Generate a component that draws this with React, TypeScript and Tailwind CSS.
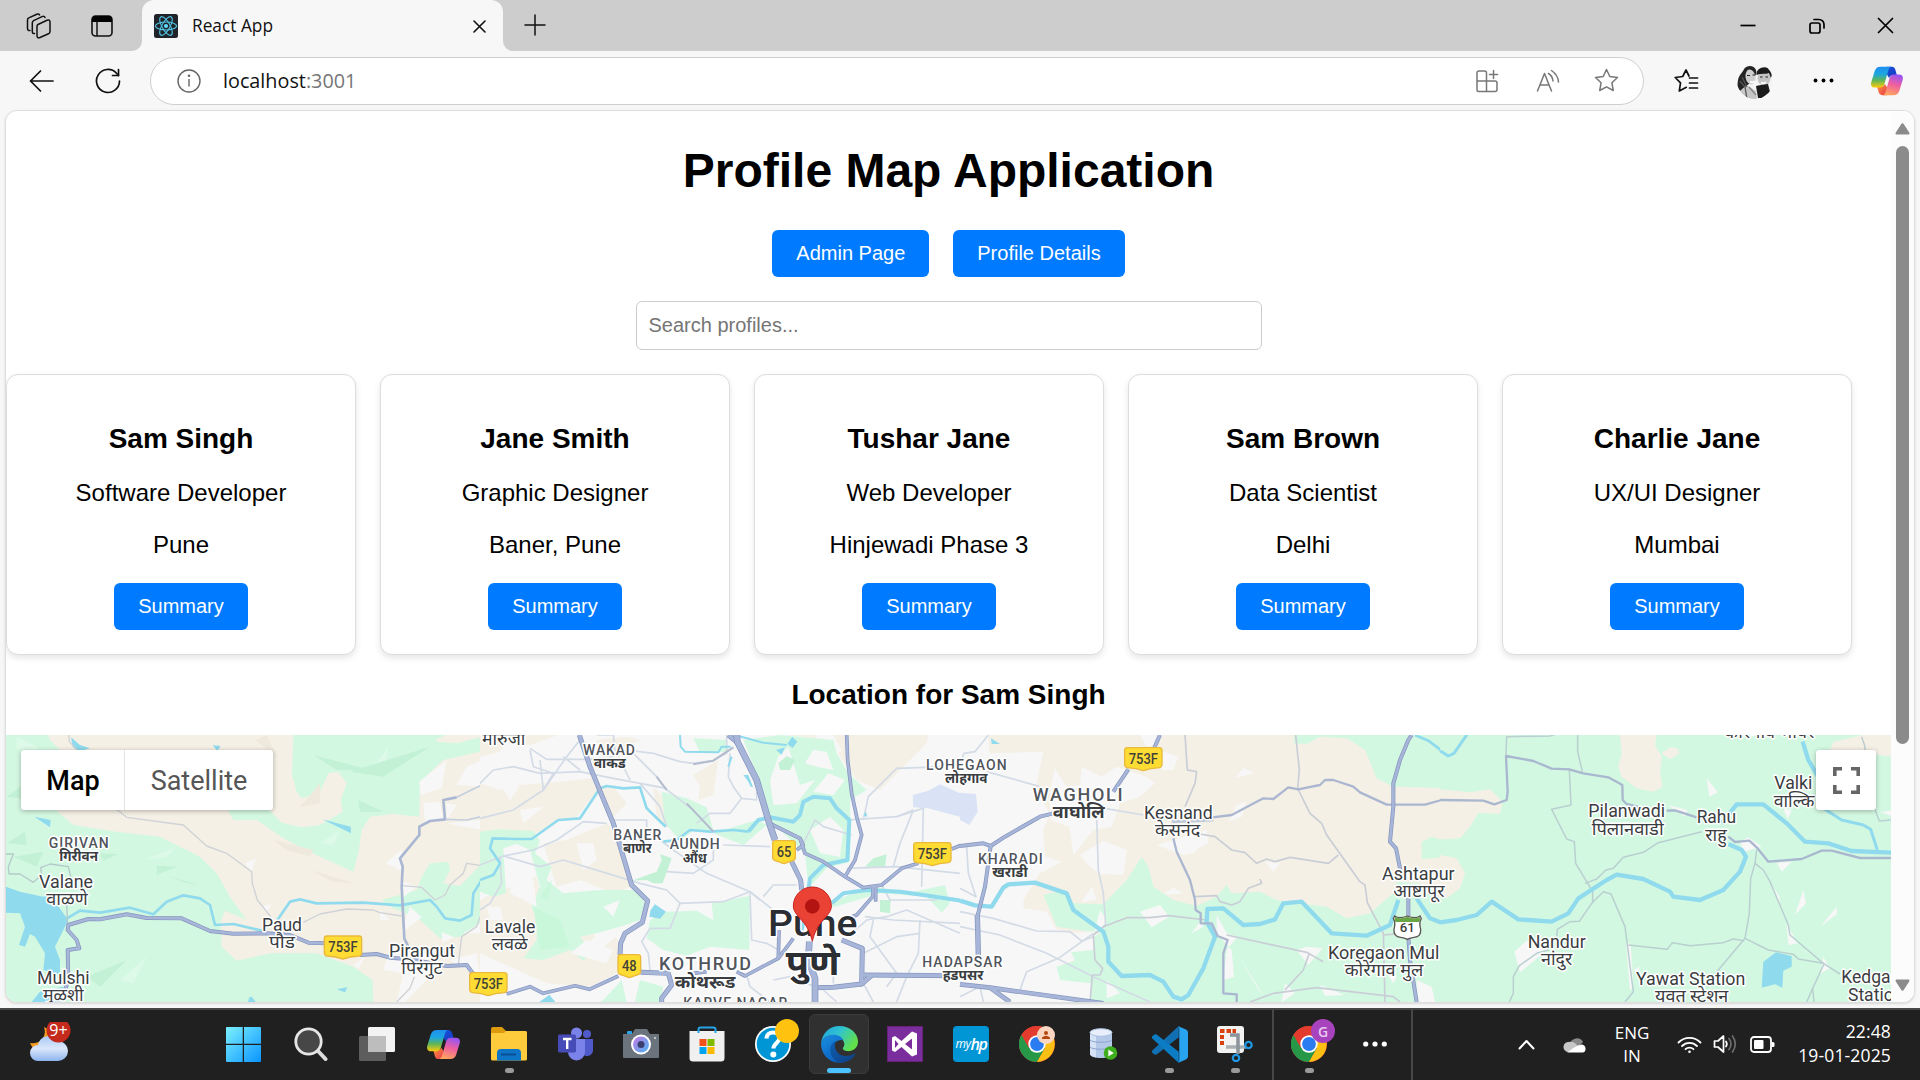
import React from "react";

type Pts = { p: string; f: string };
const BEIGE = "#f5f0e5";
const GREEN = "#d3f8e2";
const DGREEN = "#c3f1d5";
const URBAN = "#f7f7f7";
const WATER = "#90daee";

function Area({ p, f }: Pts) {
  return <polygon points={p} fill={f} />;
}
function Areas({ list, f }: { list: string[]; f: string }) {
  return (
    <>
      {list.map((p, i) => (
        <Area key={i} p={p} f={f} />
      ))}
    </>
  );
}
function Lines({ list, c, w }: { list: string[]; c: string; w: number }) {
  return (
    <>
      {list.map((p, i) => (
        <polyline key={i} points={p} fill="none" stroke={c} strokeWidth={w} strokeLinejoin="round" />
      ))}
    </>
  );
}
function Highway({ list, w = 13 }: { list: string[]; w?: number }) {
  return (
    <>
      <Lines list={list} c="#8494bd" w={w} />
      <Lines list={list} c="#a6b5d8" w={w - 4} />
    </>
  );
}

type LabelProps = { x: number; y: number; w: number; t: string; s: number; wt?: number; c?: string };
function Label({ x, y, w, t, s, wt = 400, c = "#3a3d41" }: LabelProps) {
  return (
    <text
      x={x}
      y={y}
      textAnchor="middle"
      textLength={w}
      lengthAdjust="spacingAndGlyphs"
      fontSize={s}
      fontWeight={wt}
      fill={c}
      stroke="#ffffff"
      strokeWidth={9}
      strokeLinejoin="round"
      style={{ paintOrder: "stroke" }}
    >
      {t}
    </text>
  );
}
function Caps({ x, y, w, t, s }: LabelProps) {
  return (
    <text
      x={x - 2}
      y={y}
      textAnchor="middle"
      textLength={w}
      lengthAdjust="spacing"
      fontSize={s}
      fontWeight={500}
      fill="#51555c"
      stroke="#ffffff"
      strokeWidth={9}
      strokeLinejoin="round"
      style={{ paintOrder: "stroke" }}
    >
      {t}
    </text>
  );
}
function Shield({ x, y, t }: { x: number; y: number; t: string }) {
  const w = t.length > 2 ? 56 : 34;
  return (
    <g transform={`translate(${x} ${y})`}>
      <path
        d={`M${-w + 8},-34 H${w - 8} Q${w},-34 ${w},-26 V16 Q${w},24 ${w - 8},26 Q20,28 0,35 Q-20,28 ${-w + 8},26 Q${-w},24 ${-w},16 V-26 Q${-w},-34 ${-w + 8},-34Z`}
        fill="#ffdc33"
        stroke="#e9b93c"
        strokeWidth={4}
      />
      <text x={0} y={15} textAnchor="middle" fontSize={42} fontWeight={500} fill="#41433a" textLength={t.length > 2 ? 88 : 44} lengthAdjust="spacingAndGlyphs">
        {t}
      </text>
    </g>
  );
}

function MapCanvas() {
  return (
    <svg className="block h-full w-full" viewBox="6 735 1885 267" preserveAspectRatio="none" fontFamily="Roboto, 'Noto Sans', sans-serif">
      <g transform="translate(0 720) scale(0.333333)">
        {/* Far west */}
        <g>
          <Area f={GREEN} p="0,0 1445,0 1445,870 0,870" />
          <Areas
            f="#ddfae8"
            list={["50,50 110,80 118,90 50,88", "1120,140 1165,82 1155,135", "250,400 320,350 270,420", "360,780 440,710 400,790", "960,370 1020,330 1000,375", "430,420 530,380 500,410", "130,720 260,770 200,790"]}
          />
          <Areas
            f={DGREEN}
            list={["940,105 1110,150 1010,150", "1050,155 1290,80 1150,170", "1075,240 1150,275 1080,275", "20,370 75,335 80,375", "40,410 130,395 110,440", "300,400 355,402 310,422", "470,437 530,440 470,465", "500,465 600,497 560,490", "260,770 380,720 300,800", "20,230 62,200 62,235"]}
          />
          <Area
            f={BEIGE}
            p="145,45 880,45 876,165 890,215 905,235 958,220 985,160 1015,155 1040,190 1022,240 1028,275 960,315 905,322 845,308 800,262 680,262 700,300 770,300 850,355 960,410 1060,455 1075,400 1085,330 1110,290 1180,282 1258,290 1260,185 1330,120 1440,95 1445,846 1120,846 1118,780 1060,740 950,700 810,700 710,722 665,680 663,600 675,572 740,600 690,530 650,460 600,410 480,350 350,335 220,315 170,272 100,240 190,100 150,60"
          />
          <Areas f={BEIGE} list={["1305,60 1340,45 1445,45 1445,50 1370,70 1315,66"]} />
          <Areas f="#eee9dc" list={["820,360 940,390 930,410 860,390", "930,450 1065,490 1000,485", "765,60 800,45 830,110", "900,262 960,190 960,250"]} />
          <Area f={GREEN} p="1145,540 1250,510 1265,470 1290,430 1345,425 1350,450 1330,490 1380,498 1445,430 1445,610 1380,650 1320,655 1260,600 1170,560" />
          <Areas
            f={URBAN}
            list={[
              "1258,185 1340,120 1325,205 1262,225",
              "1370,195 1400,140 1445,120 1445,200",
              "1270,250 1320,245 1330,300 1275,305",
              "1340,250 1370,255 1340,300",
              "1340,310 1440,300 1445,330",
              "1157,430 1205,388 1203,452",
              "735,430 768,415 755,455",
              "1230,560 1265,592 1203,640",
              "1325,637 1362,652 1328,668",
              "1200,480 1250,500 1205,535",
              "1140,570 1170,600 1140,600",
              "780,560 815,553 800,575",
              "1170,690 1310,700 1280,780 1215,846 1190,846 1210,760 1150,750",
              "1060,735 1095,710 1075,745",
              "1350,720 1430,700 1440,760 1375,740",
              "1390,640 1440,610 1440,640",
            ]}
          />
          <Areas
            f={WATER}
            list={[
              "18,500 60,515 130,530 160,520 165,545 205,600 180,650 165,680 180,720 180,765 130,750 135,700 105,650 90,642 75,680 57,675 75,620 60,580 18,578",
              "213,52 240,75 270,85 235,95 218,80",
              "638,75 662,78 652,93",
              "103,290 152,300 150,322",
              "967,298 1052,320 1053,340",
              "1010,808 1042,802 1035,817",
              "748,832 755,830 768,846 744,846",
              "120,815 190,800 180,846 95,846",
            ]}
          />
          <Lines c={WATER} w={8} list={["185,605 240,572 300,578 390,563 460,583 500,545 550,526 600,535 630,555 645,615 700,612 785,632", "832,600 870,545 900,538 950,550 1090,548 1200,556 1290,540 1310,560 1335,595 1380,602 1415,585 1420,520 1445,480"]} />
          <Lines c="#b5c9c9" w={4} list={["18,402 40,402 25,440 27,462 60,462 100,487 125,465 122,443 150,432 205,440 212,470", "200,550 203,620"]} />
          <Lines
            c="#cfd2d6"
            w={4}
            list={[
              "206,45 208,65 240,100",
              "345,265 380,292 550,315 620,378 680,400 755,455 757,490 772,540 812,590",
              "910,607 960,582 1040,567 1120,570 1140,578 1205,588",
              "1208,497 1265,502 1305,540 1335,525 1350,495 1390,460 1400,430 1445,437",
              "1243,770 1230,805 1190,846",
              "1375,735 1385,650 1430,620 1440,590",
            ]}
          />
          <Lines c="#c3cede" w={5} list={["1335,298 1400,300 1445,290", "1370,232 1445,195"]} />
          <Lines c="#a9b7d2" w={8} list={["1370,232 1330,240 1335,298 1290,303 1258,320 1258,345 1200,415 1208,440 1205,500 1213,655 1225,680"]} />
          <Highway w={12} list={["192,820 205,780 203,690 238,685 230,660 203,630 205,615 265,597 300,598 380,583 440,594 545,595 630,633 700,641 800,640 870,645 925,668 980,670", "1080,705 1130,702 1170,713 1230,718 1340,738 1400,735 1430,775"]} />
        </g>

        {/* City centre */}
        <g transform="translate(1440 0)">
          <Area f={URBAN} p="0,0 1445,0 1445,870 0,870" />
          <Areas
            f={BEIGE}
            list={[
              "0,45 235,45 150,75 85,60 60,95 0,110",
              "0,190 60,210 120,195 240,185 335,175 350,215 290,290 235,300 160,345 60,335 0,340",
              "190,370 260,360 330,330 385,310 440,430 455,500 400,520 300,480 230,500",
              "0,540 60,510 100,500 170,470 190,560 330,610 345,650 300,690 360,690 410,650 420,705 410,760 330,800 200,790 90,740 0,700",
              "350,60 440,50 480,60 370,110",
              "920,45 1345,45 1340,70 1200,210 1130,180 1080,110 1060,60",
              "520,200 570,250 565,325 530,290",
              "640,165 715,120 700,225 655,240 660,200",
              "340,200 400,200 440,250 400,290",
            ]}
          />
          <Area f={URBAN} p="1010,45 1060,45 1085,90 1050,120 1000,70" />
          <Areas
            f={GREEN}
            list={[
              "0,335 60,328 160,332 180,362 165,400 215,440 200,480 250,520 360,510 470,510 495,550 480,600 420,620 350,640 300,650 330,690 345,690 310,722 270,690 190,720 130,715 170,660 170,600 155,560 180,500 150,390 110,372 70,385 78,520 40,530 0,515",
              "790,60 900,45 1060,60 1070,100 1105,160 1160,210 1110,240 1112,330 1110,425 1040,445 985,505 975,400 900,330 870,300 845,200",
              "545,215 620,235 680,262 700,330 640,332 600,362 555,310",
              "510,600 560,575 650,572 700,600 695,550 810,527 808,690 690,680 620,707 550,690 500,655",
              "700,340 830,300 860,315 790,375",
              "1045,550 1170,500 1300,515 1395,495 1410,550 1385,578 1340,530 1200,520 1060,562",
              "370,840 425,780 440,846 360,846",
              "480,780 550,800 540,846 465,846",
              "640,55 740,60 745,95 660,98",
            ]}
          />
          <Areas
            f={URBAN}
            list={[
              "870,180 895,110 925,80 960,195 1005,180 950,250 880,255",
              "1000,215 1045,160 1095,180 1060,225",
              "1050,290 1090,330 1080,410 1020,400 990,330",
              "975,130 1000,90 1040,95 1060,150 1010,140",
              "120,270 190,260 130,310",
              "60,190 120,200 90,240",
              "100,430 160,480 170,560 90,520",
              "370,560 420,540 400,590",
              "270,700 320,660 400,690 380,730",
              "290,370 340,370 350,420 310,450",
              "20,560 60,560 70,600 30,600",
            ]}
          />
          <Areas f={DGREEN} list={["455,482 530,455 545,420 540,402 575,415 548,490 520,490 500,480", "1200,540 1232,540 1230,580 1200,575", "1155,440 1180,415 1220,403 1215,440", "895,130 920,108 945,120 930,150 900,150"]} />
          <Areas f="#c9f7da" list={["160,560 240,600 270,680 180,690", "180,530 215,480 205,540"]} />
          <Area f="#d9e3f5" p="1298,225 1345,212 1380,193 1445,222 1445,292 1345,265 1300,262" />
          <Lines
            c="#d3dbe6"
            w={5}
            list={[
              "0,190 40,150 100,140 180,160 300,155 400,175 560,205",
              "0,295 100,270 190,210 260,110 300,60",
              "150,90 160,140 220,160 190,210",
              "150,85 200,118 330,118 400,110 440,90 520,100 600,125 640,130 700,122 760,82",
              "180,120 190,210",
              "460,100 530,170 555,205 640,270 700,335",
              "0,435 70,408 180,440 250,420 480,490 560,510 600,550 570,625 510,625 485,665 505,700 510,750",
              "70,408 160,390 230,360 310,305 380,310",
              "400,300 500,300 500,330 580,390 680,460 810,515 840,540",
              "700,365 700,420 640,460 560,455",
              "480,190 540,260 560,320",
              "350,45 400,45 405,90 450,180",
              "750,100 745,170 760,200 785,235 830,240 830,215",
              "785,235 750,280 690,280 650,310",
              "600,550 730,545 810,515 880,570",
              "810,520 815,660 860,670 895,690",
              "850,530 880,495 950,495",
              "730,375 870,380",
              "970,370 990,330 1005,300 1030,320 1115,345",
              "1105,300 1250,290 1330,265 1325,500",
              "1150,300 1165,230 1250,145 1400,140",
              "1250,290 1300,270 1260,370 1240,440",
              "1100,445 1250,440 1440,460",
              "1205,495 1230,540 1370,540",
              "1155,590 1240,600 1440,610",
              "1115,640 1160,600 1220,590 1280,570 1440,640",
              "1180,600 1170,650 1250,760 1220,800",
              "1320,600 1315,700 1280,770 1250,846",
              "1150,700 1250,650 1320,640",
              "800,765 810,800 870,846",
              "880,780 930,770 1005,800",
              "1030,810 1070,846",
              "1060,700 1060,790",
              "1150,790 1180,846",
              "60,410 65,490 30,550 0,570",
              "250,110 300,150",
              "740,45 740,100 700,120",
            ]}
          />
          <Areas f={WATER} list={["508,590 512,570 525,553 558,575 540,596", "937,50 952,65 938,84 922,72", "888,90 915,82 905,104", "178,846 208,824 226,846", "1150,285 1158,275 1162,292", "790,165 805,165 820,205"]} />
          <Lines c={WATER} w={8} list={["0,480 40,465 60,430 30,385 38,355 110,357 155,357 235,300 300,295 360,205 380,198 430,205 480,202 500,265 557,320", "550,365 590,360 630,330 690,335 760,330 805,335"]} />
          <Lines
            c={WATER}
            w={12}
            list={["805,335 835,300 870,292 940,305 960,285 970,245 1000,230 1050,235 1070,265 1108,300 1102,420 1030,435 990,475 985,510 980,560 965,630", "1055,550 1090,520 1160,510 1260,515 1330,525 1445,542"]}
          />
          <Lines c={WATER} w={6} list={["600,45 602,80 615,95 715,97 725,80 752,80", "775,48 850,68 920,75", "755,110 745,140", "800,165 815,200"]} />
          <Lines c="#b3bccd" w={6} list={["530,170 560,210", "620,250 700,335", "640,133 700,122 760,82"]} />
          <Highway
            w={11}
            list={[
              "80,822 150,800 190,820 285,797 328,808 415,768",
              "640,760 680,755",
              "770,755 795,768 895,715 940,655",
              "895,715 897,630",
              "875,313 960,355 970,375 950,390",
              "875,313 960,355 975,400 1030,425 1095,470 1150,503 1205,495 1265,445 1315,430",
              "1415,387 1445,375",
              "1100,45 1103,120 1115,220 1130,290 1145,345 1125,420 1095,470",
              "1180,500 1178,530 1130,585 1090,600",
              "1187,500 1187,545",
            ]}
          />
          <Highway
            w={15}
            list={[
              "298,45 330,140 400,310 455,495 503,542 487,607 435,640 422,670 420,705",
              "482,757 565,760 575,795 545,835 545,846",
              "935,425 962,480 965,510",
              "745,45 775,70",
              "1085,660 1147,685 1145,792 1175,766",
              "1145,765 1445,767",
              "1005,803 1060,802 1145,792",
            ]}
          />
          <Highway w={20} list={["770,45 772,65 830,180 868,310 885,360", "988,665 985,720 1005,775 1005,846"]} />
        </g>

        {/* East of the city */}
        <g transform="translate(2880 0)">
          <Area f={BEIGE} p="0,0 1445,0 1445,870 0,870" />
          <Areas
            f={URBAN}
            list={[
              "0,45 85,45 88,100 250,95 225,210 270,280 250,330 255,410 305,425 240,460 190,540 190,565 260,575 290,630 330,650 420,640 400,700 290,740 310,780 400,790 400,846 0,846",
              "270,210 285,145 320,200 360,195 365,140 425,170 470,140 560,170 585,190 540,230 480,250 455,320 400,330 340,405 328,320 270,300",
              "540,45 610,45 590,75 560,80",
              "610,95 655,110 640,150 605,150",
              "825,175 850,143 882,160",
              "360,405 430,362 500,390 490,465 420,462 390,440",
              "590,375 740,330 745,370 715,385 700,400 670,405",
              "805,305 830,255 858,245 845,290",
              "605,525 640,503 672,520",
              "915,425 960,430 940,455",
              "365,545 395,500 410,540",
            ]}
          />
          <Areas
            f={GREEN}
            list={[
              "250,525 310,510 340,550 430,552 500,480 545,410 565,440 580,500 640,540 710,558 770,530 800,495 815,520 900,515 950,540 1100,560 1160,595 1230,580 1300,520 1310,485 1380,490 1445,555 1445,846 390,846 395,790 300,780 290,740 345,722 330,690 420,640 290,620",
              "1002,45 1445,45 1445,205 1370,202 1300,200 1250,175 1215,90 1160,55 1080,50 1040,72 1002,70",
              "1385,365 1415,350 1445,360 1445,412 1385,418",
            ]}
          />
          <Area f={URBAN} p="270,620 330,640 425,632 440,600 420,570 400,650 400,690 300,700 260,700" />
          <Areas
            f={URBAN}
            list={[
              "540,575 600,555 628,590 575,622",
              "770,585 800,640 832,650 800,690 790,780 822,770 815,690 770,640",
              "835,705 912,830 890,800",
              "1040,680 1088,685 1045,735 1010,690",
              "695,640 720,605 730,620",
              "975,790 1005,820 965,846",
              "440,780 480,820 440,835",
              "1080,795 1152,825 1095,828",
              "1280,760 1310,770 1300,790",
              "1370,780 1415,800 1425,846 1370,846",
            ]}
          />
          <Area f="#d9e3f5" p="0,218 48,222 53,275 28,315 0,300" />
          <Area f={WATER} p="93,55 120,72 95,72" />
          <Lines
            c="#d3dbe6"
            w={5}
            list={[
              "85,45 45,95 12,100 0,130",
              "80,155 240,200",
              "435,265 550,285",
              "410,300 415,450 430,520 437,615",
              "20,380 25,460 48,530 0,505",
              "0,575 100,595 230,633 330,635 365,663 400,650",
              "400,640 295,715 200,755 180,810",
              "0,620 120,645 260,700 400,770 570,846",
              "60,800 70,846",
              "0,830 50,805",
            ]}
          />
          <Lines
            c="#c9ced6"
            w={5}
            list={[
              "675,45 682,150 710,155 705,190 675,260",
              "1007,45 1018,150 1013,205 1050,280 1085,310 1100,345 1200,485 1215,495 1222,548 1270,640 1275,846",
              "720,342 765,350 815,390 855,398 890,430 920,417 945,425 990,412 1105,430 1135,405",
              "705,530 770,527 780,545 815,555 840,545 865,505 905,490 900,477",
              "430,620 500,593 570,593 625,587 740,600",
              "800,645 1040,697 1090,725",
              "1048,700 1030,750 975,810",
              "437,615 400,645 405,720 428,745 420,765 397,765 390,846",
              "870,846 940,820 1070,803 1300,830 1320,846",
              "1270,645 1330,640",
            ]}
          />
          <Lines
            c={WATER}
            w={13}
            list={[
              "0,542 45,556 95,560 130,503 145,493 225,488 320,520 340,570 430,635 445,680 445,725 485,768 570,765 610,785 640,830 665,838 685,825 730,745 765,650 740,605 742,567 790,565 850,615 900,612 945,598 970,550 1025,545 1115,640 1220,647 1290,615 1315,540",
              "1370,535 1410,595 1445,608",
            ]}
          />
          <Lines c={WATER} w={8} list={["1365,45 1405,62 1445,92"]} />
          <Lines c="#abb7d0" w={7} list={["640,355 650,395 690,480 705,540 707,570 722,580 722,610 755,610 773,648 803,660 790,700 790,820 830,823 830,846", "758,292 815,285 910,235 940,237 985,202 1015,208 1080,195 1095,180 1120,180 1180,200 1200,217 1280,254 1395,254 1445,240"]} />
          <Lines c="#c0c9da" w={9} list={["635,305 760,300"]} />
          <Highway w={12} list={["600,45 580,90", "505,148 460,215", "0,378 70,370 92,378 135,350 240,290 280,280", "92,378 75,500 52,590", "1355,45 1345,60 1320,120 1300,190 1300,260 1290,365 1308,385 1325,470", "1345,530 1345,590", "1345,650 1350,720 1370,846"]} />
          <Highway w={16} list={["52,585 55,705"]} />
          <Highway w={14} list={["0,793 90,803 430,850", "90,803 150,846"]} />
        </g>

        {/* Far east */}
        <g transform="translate(4320 0)">
          <Area f={GREEN} p="0,0 1445,0 1445,870 0,870" />
          <Areas
            f={BEIGE}
            list={[
              "540,45 650,45 645,75 665,110 660,160 668,200 640,215 590,205 545,170 535,140 545,100",
              "665,100 690,82 712,85 718,100 690,118",
              "0,208 90,217 150,208 188,245 180,282 115,278 90,320 60,355 0,358",
              "0,405 50,415 75,460 60,505 20,535 0,525",
              "1180,65 1270,45 1360,45 1360,110 1170,90",
            ]}
          />
          <Areas
            f={URBAN}
            list={[
              "800,175 833,217 808,230",
              "685,255 742,270 735,290",
              "900,365 925,352 965,380 912,395",
              "1010,428 1055,425 1025,455",
              "1030,265 1055,270 1043,298",
              "1090,510 1098,550 1065,585",
              "1190,560 1190,583 1143,618",
              "985,480 1018,530 1020,555",
              "1040,610 1072,670 1045,675",
              "223,695 260,662 320,690 285,720 240,757",
              "558,672 572,670 580,800 570,810",
              "1150,710 1168,745 1140,762",
              "1320,275 1360,272 1360,290",
              "580,750 600,740 595,760",
            ]}
          />
          <Lines
            c="#b9cfd0"
            w={4.5}
            list={[
              "198,105 200,50 330,48 348,42",
              "413,45 413,95 427,155",
              "388,150 393,255 335,268 380,357 403,365 407,430 458,515 458,550",
              "435,490 470,477 498,450 520,445 550,412 610,397 655,368 720,352 785,335",
              "350,650 352,628 390,605 418,604 455,550 490,515 513,522 555,620 580,815 555,846",
              "565,675 682,688 697,668 750,677 850,668 880,657 912,662",
              "950,390 945,430 932,475 928,580 915,655 835,750 800,800",
              "945,430 970,450 990,485 1045,615 1050,645 1150,730 1200,762",
              "915,655 985,690 1060,703 1075,717 1150,730",
              "1152,732 1118,805 1122,846",
              "1118,805 1100,846",
              "325,690 290,700 238,737 220,770 220,820 208,846",
              "1265,50 1275,80 1275,100",
              "1300,255 1318,303 1355,300",
            ]}
          />
          <Lines c="#a9b7cf" w={7} list={["0,240 130,242 163,253 200,240 203,215 198,108 280,123 335,146 388,148 430,160 505,172 547,195 548,240 560,252 600,262", "680,272 705,271 770,292", "865,350 885,366 928,362 950,382 985,425 1085,417 1145,392 1175,392 1260,414 1360,414"]} />
          <Lines
            c={WATER}
            w={13}
            list={[
              "0,607 50,600 110,585 155,545 235,598 335,605 385,580 415,535 500,480 530,464 610,477 690,515 700,530 780,540 850,510 900,455 918,410 905,390 865,372",
              "845,310 890,253 970,253 1040,310 1095,365 1165,370 1235,393 1360,398",
              "1088,65 1105,120 1140,180",
            ]}
          />
          <Lines c={WATER} w={9} list={["0,92 25,108 42,100 82,42", "1150,265 1205,300 1270,315 1292,328 1312,390"]} />
          <Area f={WATER} p="970,725 1008,697 1055,708 1055,740 1030,752 1027,803 1005,793 965,803" />
        </g>

        {/* Shields */}
        <Shield x={1029} y={682} t="753F" />
        <Shield x={1465} y={792} t="753F" />
        <Shield x={1888} y={738} t="48" />
        <Shield x={2352} y={396} t="65" />
        <Shield x={2797} y={402} t="753F" />
        <Shield x={3430} y={117} t="753F" />
        <g transform="translate(4222 620)">
          <path d="M-38,-32 Q-25,-22 0,-32 Q25,-22 38,-32 L42,-24 Q34,-12 40,8 Q42,30 20,32 Q8,33 0,38 Q-8,33 -20,32 Q-42,30 -40,8 Q-34,-12 -42,-24Z" fill="#fff" stroke="#5b5652" strokeWidth={4} />
          <path d="M-37,-30 Q-25,-20 0,-30 Q25,-20 37,-30 L38,-20 Q36,-16 35,-14 H-35 Q-36,-16 -38,-20Z" fill="#6aa543" />
          <text x={0} y={17} textAnchor="middle" fontSize={40} fontWeight={500} fill="#41433f">61</text>
        </g>

        {/* Place names */}
        <Caps x={238} y={383} w={180} t="GIRIVAN" s={42} />
        <Label x={236} y={423} w={116} t="गिरीवन" s={44} wt={700} />
        <Label x={198} y={504} w={162} t="Valane" s={54} />
        <Label x={201} y={556} w={124} t="वाळणे" s={53} />
        <Label x={190} y={793} w={158} t="Mulshi" s={54} />
        <Label x={190} y={844} w={122} t="मुळशी" s={53} />
        <Label x={846} y={633} w={120} t="Paud" s={54} />
        <Label x={846} y={684} w={78} t="पौड" s={53} />
        <Label x={1266} y={710} w={198} t="Pirangut" s={54} />
        <Label x={1266} y={762} w={124} t="पिरंगुट" s={53} />
        <Label x={1511} y={76} w={130} t="मारुंजी" s={53} />
        <Caps x={1829} y={104} w={156} t="WAKAD" s={42} />
        <Label x={1829} y={144} w={96} t="वाकड" s={44} wt={700} />
        <Caps x={1914} y={359} w={144} t="BANER" s={42} />
        <Label x={1912} y={399} w={86} t="बाणेर" s={44} wt={700} />
        <Caps x={2086} y={388} w={150} t="AUNDH" s={42} />
        <Label x={2084} y={428} w={72} t="औंध" s={44} wt={700} />
        <Label x={1530} y={638} w={152} t="Lavale" s={54} />
        <Label x={1529} y={689} w={108} t="लवळे" s={53} />
        <Caps x={2117} y={751} w={276} t="KOTHRUD" s={54} />
        <Label x={2115} y={803} w={182} t="कोथरूड" s={53} wt={700} />
        <Caps x={2208} y={865} w={312} t="KARVE NAGAR" s={42} />
        <Label x={2438} y={649} w={268} t="Pune" s={112} wt={500} c="#2b2e33" />
        <Label x={2438} y={766} w={162} t="पुणे" s={106} wt={700} c="#2b2e33" />
        <Caps x={2901} y={149} w={242} t="LOHEGAON" s={42} />
        <Label x={2899} y={189} w={128} t="लोहगाव" s={44} wt={700} />
        <Caps x={2889} y={741} w={240} t="HADAPSAR" s={42} />
        <Label x={2889} y={781} w={122} t="हडपसर" s={44} wt={700} />
        <Caps x={3235} y={242} w={270} t="WAGHOLI" s={54} />
        <Label x={3236} y={293} w={156} t="वाघोलि" s={53} wt={700} />
        <Caps x={3033} y={431} w={194} t="KHARADI" s={42} />
        <Label x={3030} y={471} w={106} t="खराडी" s={44} wt={700} />
        <Label x={3535} y={296} w={206} t="Kesnand" s={54} />
        <Label x={3533} y={348} w={136} t="केसनंद" s={53} />
        <Label x={4255} y={479} w={218} t="Ashtapur" s={54} />
        <Label x={4257} y={531} w={154} t="आष्टापूर" s={53} />
        <Label x={4151} y={717} w={334} t="Koregaon Mul" s={54} />
        <Label x={4152} y={769} w={236} t="कोरेगाव मुल" s={53} />
        <Label x={4880} y={292} w={230} t="Pilanwadi" s={54} />
        <Label x={4883} y={344} w={216} t="पिलानवाडी" s={53} />
        <Label x={5149} y={310} w={118} t="Rahu" s={54} />
        <Label x={5148} y={362} w={64} t="राहु" s={53} />
        <Label x={5380} y={208} w={114} t="Valki" s={54} />
        <Label x={5382} y={260} w={122} t="वाल्कि" s={53} />
        <Label x={5308} y={54} w={270} t="कोरेगाव भीवर" s={53} />
        <Label x={4670} y={684} w={174} t="Nandur" s={54} />
        <Label x={4670} y={735} w={94} t="नांदुर" s={53} />
        <Label x={5072} y={794} w={328} t="Yawat Station" s={54} />
        <Label x={5075} y={846} w={220} t="यवत स्टेशन" s={53} />
        <Label x={5627} y={790} w={206} t="Kedgaon" s={54} />
        <Label x={5627} y={842} w={166} t="Station" s={54} />

        {/* Pin */}
        <path d="M2437,664 C2431,640 2424,622 2406,602 C2392,586 2380,574 2380,558 A57,57 0 0 1 2494,558 C2494,574 2482,586 2468,602 C2450,622 2443,640 2437,664Z" fill="#ea4335" stroke="#c5221f" strokeWidth={3} />
        <circle cx={2437} cy={559} r={22} fill="#b31412" />
      </g>
    </svg>
  );
}

/* ---------- Icons ---------- */
const line = { fill: "none", strokeLinecap: "round" as const, strokeLinejoin: "round" as const };

function Copilot({ size, id }: { size: number; id: string }) {
  return (
    <svg width={size} height={size} viewBox="0 0 36 36">
      <defs>
        <linearGradient id={id + "a"} x1="0" y1="0" x2="0" y2="1">
          <stop offset="0" stopColor="#1f8ff0" />
          <stop offset=".35" stopColor="#1ba6e0" />
          <stop offset=".65" stopColor="#5fb558" />
          <stop offset="1" stopColor="#ffcb0a" />
        </linearGradient>
        <linearGradient id={id + "b"} x1=".6" y1="0" x2=".3" y2="1">
          <stop offset="0" stopColor="#9a55f2" />
          <stop offset=".45" stopColor="#ee5fa0" />
          <stop offset="1" stopColor="#ffa75a" />
        </linearGradient>
        <linearGradient id={id + "c"} x1="0" y1="0" x2="1" y2="1">
          <stop offset="0" stopColor="#1650d8" />
          <stop offset="1" stopColor="#1a3ac0" />
        </linearGradient>
        <linearGradient id={id + "d"} x1="0" y1="0" x2="1" y2="1">
          <stop offset="0" stopColor="#ff9a3c" />
          <stop offset="1" stopColor="#e8384f" />
        </linearGradient>
      </defs>
      <path d="M18 3h5c2.500 0 3.400 1.500 4 3.500L28.500 12H24c-2 0-3 1-3.700 3L18 11z" fill={`url(#${id}c)`} />
      <path d="M18 33h-5c-2.500 0-3.400-1.500-4-3.500L7.500 24H12c2 0 3-1 3.700-3L18 25z" fill={`url(#${id}d)`} />
      <path d="M11 3h12c-2 0-3 2-3.700 4.500l-4 13.500c-.8 2.500-2 4-4.600 4H5c-3.500 0-4.500-3-3.600-6L5 7.500C6 4.500 8 3 11 3z" fill={`url(#${id}a)`} />
      <path d="M25 33H13c2 0 3-2 3.700-4.500l4-13.500c.8-2.500 2-4 4.600-4H31c3.500 0 4.500 3 3.600 6L31 28.500c-1 3-3 4.500-6 4.500z" fill={`url(#${id}b)`} />
    </svg>
  );
}

function ReactLogo() {
  return (
    <svg width="24" height="24" viewBox="0 0 24 24">
      <rect width="24" height="24" rx="2.500" fill="#20232a" />
      <g fill="none" stroke="#4fc6e4" strokeWidth="1.1">
        <ellipse cx="12" cy="12" rx="10.500" ry="4" />
        <ellipse cx="12" cy="12" rx="10.500" ry="4" transform="rotate(60 12 12)" />
        <ellipse cx="12" cy="12" rx="10.500" ry="4" transform="rotate(120 12 12)" />
      </g>
      <circle cx="12" cy="12" r="2.100" fill="#61dafb" />
    </svg>
  );
}

function Avatar() {
  return (
    <svg width="36" height="36" viewBox="0 0 36 36">
      <clipPath id="avc"><circle cx="18" cy="18" r="18" /></clipPath>
      <g clipPath="url(#avc)">
        <rect width="36" height="36" fill="#f5f5f5" />
        <path d="M1 17C2 12 6 9 7 6c3-4 10-4 12 1 1 3-1 6-2 10l-9 7-5 4-3-4z" fill="#242424" />
        <path d="M2 31c2-4 5-8 9-8l8 5 1 8H0z" fill="#c6c6c6" />
        <ellipse cx="13.500" cy="14" rx="5" ry="7.500" fill="#cfcfcf" transform="rotate(-10 13.500 14)" />
        <ellipse cx="27" cy="15.500" rx="6.500" ry="7" fill="#c4c4c4" />
        <path d="M19.500 12c-1-8 12-11 15-3 .5 2 .3 4-.6 6l-2-5c-4 1.500-8 0-12.400 2z" fill="#1c1c1c" />
        <path d="M19 23l5-1 7-1 2 8-8 6h-4z" fill="#1b1b1b" />
        <path d="M10 12.500h3M15.500 12h2.500M23 14h2.500M28.500 14h2.500" stroke="#222" strokeWidth="1.200" />
        <path d="M13 18.500q3 2 4.500-.5M24 19.500q3 2 5-.5" stroke="#fff" strokeWidth="1.600" fill="none" />
        <path d="M3 18l5 6 2 12M5 14l5 10" stroke="#555" strokeWidth="1.300" fill="none" />
        <path d="M12 24l7 8" stroke="#888" strokeWidth="1.500" />
      </g>
    </svg>
  );
}

function Chrome() {
  return (
    <svg width="36" height="36" viewBox="0 0 36 36">
      <circle cx="18" cy="18" r="18" fill="#ea4335" />
      <path d="M18 18L2.400 9A18 18 0 0 0 18 36l8-14z" fill="#279847" />
      <path d="M18 36A18 18 0 0 0 33.600 9.500H18l8 12.500z" fill="#fcc015" />
      <path d="M18 9.500h15.600A18 18 0 0 0 2.400 9L10 22z" fill="#e33b2e" />
      <circle cx="18" cy="18" r="8.700" fill="#fff" />
      <circle cx="18" cy="18" r="6.900" fill="#2a7cf0" />
    </svg>
  );
}

function Edge() {
  return (
    <svg width="37" height="37" viewBox="0 0 36 36">
      <defs>
        <linearGradient id="eg1" x1="0" y1="0" x2="1" y2=".5"><stop offset="0" stopColor="#1f9fe0" /><stop offset=".5" stopColor="#30c3cf" /><stop offset="1" stopColor="#62e04a" /></linearGradient>
        <linearGradient id="eg2" x1="0" y1="0" x2=".6" y2="1"><stop offset="0" stopColor="#1b8fe0" /><stop offset="1" stopColor="#0a5fc0" /></linearGradient>
        <linearGradient id="eg3" x1="0" y1="0" x2="1" y2="1"><stop offset="0" stopColor="#0d5fb4" /><stop offset="1" stopColor="#103f80" /></linearGradient>
      </defs>
      <path d="M0 17C1 7 8 0 18 0s18 7 18 15c0 6-4.500 9.500-9.500 9.500-4 0-6-1.500-5-3.500 1.500-2 1.500-4 .5-6-2-4-6-6-10.500-6C6 9 1 12 0 17z" fill="url(#eg1)" />
      <path d="M0 17c1-5 6-8.500 12-8.500 5 0 8.500 2.300 10 5.500-6-1.500-11 3-10.500 9 .5 6 5 11.500 11 12.300C9 38 0 28 0 17z" fill="url(#eg2)" />
      <path d="M14.500 14.500C11 22 17 30 26 29c3-.3 5-1.300 6.500-2.300.8-.4 1.300.2.900.9C30 33 25 36 18.500 36 12 34 8.500 28 9 22c.2-3.500 2.500-6.500 5.500-7.500z" fill="url(#eg3)" />
    </svg>
  );
}

function TaskSlot({ children, dot, active, badge }: { children: React.ReactNode; dot?: boolean; active?: boolean; badge?: React.ReactNode }) {
  return (
    <div className="flex h-full w-[66px] items-start justify-center">
      <div className={active ? "relative mt-1 flex h-[60px] w-[60px] items-center justify-center rounded-md border border-[#3b3b3b] bg-[#303030]" : "relative mt-1 flex h-[60px] w-[60px] items-center justify-center"}>
        {children}
        {badge}
        {dot && <div className="absolute bottom-[1px] left-[26px] h-[5px] w-[9px] rounded-full bg-[#9a9a9a]" />}
        {active && <div className="absolute bottom-0 left-[17px] h-[5px] w-6 rounded-full bg-[#4cc2ff]" />}
      </div>
    </div>
  );
}

function Taskbar() {
  return (
    <div className="flex h-[72px] items-start border-t-2 border-[#474747] bg-[#202020] font-['Open_Sans',sans-serif] text-white">
      <div className="flex h-full w-[210px] pl-[29px] pt-[12px]">
        <svg width="44" height="48" viewBox="0 0 44 48">
          <defs><linearGradient id="cl" x1="0" y1="0" x2="0" y2="1"><stop offset="0" stopColor="#a9c9f7" /><stop offset=".5" stopColor="#dbe7fa" /><stop offset="1" stopColor="#8db4ee" /></linearGradient></defs>
          <path d="M15 5c3 8-2 18-14 16 3 8 12 9 18 5s8-12 4-17z" fill="#f39c1f" />
          <path d="M9 39a8 8 0 0 1 0-16 11 11 0 0 1 20-4 10 10 0 0 1 0 20z" fill="url(#cl)" />
          <circle cx="29.500" cy="8.500" r="12" fill="#c42b1c" />
          <text x="29.500" y="14.300" textAnchor="middle" fontSize="16" fill="#fff" fontFamily="'Open Sans',sans-serif">9+</text>
        </svg>
      </div>
      <div className="mr-[2px] h-full">
        <TaskSlot>
          <svg width="35" height="35" viewBox="0 0 35 35">
            <defs><linearGradient id="wi" gradientUnits="userSpaceOnUse" x1="0" y1="0" x2="35" y2="35"><stop offset="0" stopColor="#7cf0ff" /><stop offset="1" stopColor="#0a95ff" /></linearGradient></defs>
            <path d="M0 1a1 1 0 0 1 1-1h15.700v16.700H0zM18 0h16a1 1 0 0 1 1 1v15.700H18zM0 18h16.700v17H1a1 1 0 0 1-1-1zM18 18h17v16a1 1 0 0 1-1 1H18z" fill="url(#wi)" />
          </svg>
        </TaskSlot>
      </div>
      <TaskSlot>
        <svg width="34" height="34" viewBox="0 0 34 34">
          <path d="M24 24l7.500 8" stroke="#dcdcdc" strokeWidth="4" strokeLinecap="round" />
          <circle cx="14.500" cy="14.500" r="12.700" fill="#474747" stroke="#e6e6e6" strokeWidth="2.800" />
        </svg>
      </TaskSlot>
      <TaskSlot>
        <svg width="36" height="34" viewBox="0 0 36 34">
          <rect x="9" y="0" width="27" height="25" rx="1.500" fill="#f3f3f3" />
          <rect x="0" y="9" width="27" height="25" rx="1.500" fill="#5d5d5d" />
          <rect x="9" y="9" width="18" height="16" fill="#bdbdbd" />
        </svg>
      </TaskSlot>
      <TaskSlot><Copilot size={35} id="tb" /></TaskSlot>
      <TaskSlot dot>
        <svg width="36" height="34" viewBox="0 0 36 34">
          <path d="M0 2a2 2 0 0 1 2-2h9l4 4v6H0z" fill="#dc9a0c" />
          <path d="M0 6h13l2-2h19.500A1.500 1.500 0 0 1 36 5.500V32a1.500 1.500 0 0 1-1.500 1.500h-33A1.500 1.500 0 0 1 0 32z" fill="#fdcb3c" />
          <path d="M6 33.500V26a4 4 0 0 1 4-4h16a4 4 0 0 1 4 4v7.500z" fill="#0e74c8" />
          <path d="M10 27.500h15" stroke="#0a4f93" strokeWidth="2" />
        </svg>
      </TaskSlot>
      <TaskSlot>
        <svg width="36" height="34" viewBox="0 0 36 34">
          <circle cx="19.500" cy="6" r="5.500" fill="#7b83eb" /><circle cx="30" cy="7" r="4" fill="#5059c9" />
          <path d="M24 12h12v10a6 6 0 0 1-12 2z" fill="#5059c9" />
          <path d="M11 12h17v13a8.500 8.500 0 0 1-17 0z" fill="#7b83eb" />
          <rect x="1" y="7.500" width="18" height="18" rx="1.500" fill="#464bb8" />
          <path d="M6 12h8.500M10.200 12v10" stroke="#fff" strokeWidth="2.400" />
        </svg>
      </TaskSlot>
      <TaskSlot>
        <svg width="36" height="30" viewBox="0 0 36 30">
          <rect x="4" y="2" width="5" height="4" rx="1" fill="#2ba3e8" />
          <path d="M0 5h9l3-5h12l3 5h9v23a1 1 0 0 1-1 1H1a1 1 0 0 1-1-1z" fill="#6b737d" />
          <defs><linearGradient id="cam" x1="0" y1="0" x2="1" y2="1"><stop offset="0" stopColor="#c77be6" /><stop offset="1" stopColor="#4ab4f0" /></linearGradient></defs>
          <circle cx="18" cy="15.500" r="10" fill="#fff" />
          <circle cx="18" cy="15.500" r="8" fill="url(#cam)" />
          <circle cx="18" cy="15.500" r="3.500" fill="#3b3f70" /><circle cx="32" cy="9" r="1" fill="#ddd" />
        </svg>
      </TaskSlot>
      <TaskSlot>
        <svg width="36" height="36" viewBox="0 0 36 36">
          <path d="M.500 5h35v27a3.500 3.500 0 0 1-3.500 3.500H4A3.500 3.500 0 0 1 .500 32z" fill="#f0f0f0" />
          <path d="M9.500 7V3.500a2 2 0 0 1 2-2h13a2 2 0 0 1 2 2V7" fill="none" stroke="#26a3e6" strokeWidth="2" />
          <rect x="10.500" y="13" width="7" height="7" fill="#f1511b" /><rect x="18.500" y="13" width="7" height="7" fill="#80b900" /><rect x="10.500" y="21" width="7" height="7" fill="#00a4ef" /><rect x="18.500" y="21" width="7" height="7" fill="#fbb900" />
        </svg>
      </TaskSlot>
      <TaskSlot badge={<div className="absolute left-[32px] top-[5px] h-6 w-6 rounded-full bg-[#ffc20e]" />}>
        <svg width="36" height="36" viewBox="0 0 36 36">
          <circle cx="18" cy="18" r="18" fill="#fff" /><circle cx="18" cy="18" r="16.300" fill="#0096d6" />
          <path d="M11.500 12.500c0-4 3-6 6.500-6s6.500 2 6.500 5.500c0 5-6 5-6 10.500" fill="none" stroke="#fff" strokeWidth="4.200" />
          <circle cx="18.300" cy="28.500" r="3" fill="#fff" />
        </svg>
      </TaskSlot>
      <TaskSlot active><Edge /></TaskSlot>
      <TaskSlot>
        <svg width="36" height="36" viewBox="0 0 36 36">
          <rect width="36" height="36" fill="#7a2d9c" />
          <rect x=".500" y=".500" width="35" height="35" fill="none" stroke="#68217a" />
          <path d="M25 5.500l5 2v21l-5 2L14.500 21 8 26l-3-1.500v-13L8 10l6.500 5z" fill="#fff" />
          <path d="M8 14v8l3.500-4zM25 12.500v11L18 18z" fill="#7a2d9c" />
        </svg>
      </TaskSlot>
      <TaskSlot>
        <div className="flex h-9 w-9 items-center justify-center rounded-sm bg-[#0096d6] text-[12px] italic leading-none tracking-[-0.5px]">
          my<span className="text-[16px] font-semibold tracking-[-1.5px]">hp</span>
        </div>
      </TaskSlot>
      <TaskSlot
        badge={
          <div className="absolute left-[30px] top-[12px] flex h-[18px] w-[18px] items-center justify-center rounded-full bg-[#fbd7c2]">
            <svg width="8" height="8" viewBox="0 0 8 8"><circle cx="4" cy="2" r="2" fill="#b5470f" /><path d="M0 8V6.500Q4 3 8 6.500V8z" fill="#b5470f" /></svg>
          </div>
        }
      >
        <Chrome />
      </TaskSlot>
      <TaskSlot>
        <svg width="30" height="32" viewBox="0 0 30 32">
          <path d="M2 4v22c0 2 5 4 11 4s11-2 11-4V4z" fill="#b4c8e8" />
          <path d="M2 4v22c0 1.500 2.500 3 6 3.600V5z" fill="#d6e2f5" />
          <ellipse cx="13" cy="4.500" rx="11" ry="3.800" fill="#e8effa" stroke="#a9bfe0" />
          <path d="M2 12c2 3 20 3 22 0M2 19c2 3 20 3 22 0" fill="none" stroke="#8ba6cf" />
          <circle cx="22.500" cy="25" r="6.800" fill="#3eae1c" /><path d="M20.300 21.500v7l5.500-3.500z" fill="#fff" />
        </svg>
      </TaskSlot>
      <TaskSlot dot>
        <svg width="37" height="37" viewBox="0 0 36 36">
          <path d="M27 0L1.500 23.500c-1 .8-.8 2 0 2.700l2 1.500c.8.500 1.500.5 2.300-.1L27 11z" fill="#1070b3" />
          <path d="M27 36L1.500 12.500c-1-.8-.8-2 0-2.700l2-1.500c.8-.5 1.500-.5 2.300.1L27 25z" fill="#0c7dc5" />
          <path d="M26 0l8 3.500a3 3 0 0 1 2 2.500v24a3 3 0 0 1-2 2.500L26 36c1-.7 1.500-1.500 1.500-3V3c0-1.500-.5-2.300-1.500-3z" fill="#27a3f0" />
        </svg>
      </TaskSlot>
      <TaskSlot dot>
        <svg width="36" height="36" viewBox="0 0 36 36">
          <rect x="0" y="0" width="27" height="27" rx="3" fill="#f2f2f2" />
          <path d="M3 3h4.500v4H3zM9.500 3H14v4H9.500zM15.500 3H19v4h-3.500zM3 9h4v4H3zM3 15h4v4H3z" fill="#d8400e" />
          <path d="M9 21h20" stroke="#a9b0b6" strokeWidth="3.500" />
          <path d="M13 9h8v19" fill="none" stroke="#8b939b" strokeWidth="3.500" />
          <circle cx="31.500" cy="19" r="3.200" fill="none" stroke="#2196e3" strokeWidth="2.200" />
          <circle cx="19" cy="32" r="3.200" fill="none" stroke="#2196e3" strokeWidth="2.200" />
        </svg>
      </TaskSlot>
      <div className="ml-[4px] h-full w-[2px] bg-[#474747]" />
      <div className="ml-[2px] flex h-full">
        <TaskSlot dot badge={<div className="absolute left-[32px] top-[5px] flex h-6 w-6 items-center justify-center rounded-full bg-[#a743bd] text-[14px] font-semibold text-[#e9c9f0]">G</div>}>
          <Chrome />
        </TaskSlot>
        <TaskSlot>
          <svg width="24" height="6" viewBox="0 0 24 6" fill="#fff"><circle cx="2.700" cy="3" r="2.600" /><circle cx="12" cy="3" r="2.600" /><circle cx="21.300" cy="3" r="2.600" /></svg>
        </TaskSlot>
      </div>
      <div className="ml-[3px] h-full w-[2px] bg-[#474747]" />
      <div className="flex h-[68px] flex-1 items-center">
        <svg className="ml-[105px]" width="17" height="11" viewBox="0 0 17 11" {...line} stroke="#fff" strokeWidth="2"><path d="M1.500 9.500l7-7.500 7 7.500" /></svg>
        <svg className="ml-[28px]" width="25" height="17" viewBox="0 0 25 17">
          <path d="M7 8a7 7 0 0 1 13-2l-6 6z" fill="#8b8b8b" /><path d="M5 16A5 5 0 0 1 6 6c4-1 8 2 9 5l-5 5z" fill="#c7c7c7" /><path d="M4 16.500c2-1 9-7.500 15-8a4.200 4.200 0 0 1 1 8z" fill="#fff" />
        </svg>
        <div className="ml-[25px] w-[38px] text-center text-[17px] leading-[23px]">ENG<br />IN</div>
        <svg className="ml-[26px]" width="25" height="19" viewBox="0 0 25 19" {...line} stroke="#fff" strokeWidth="1.800">
          <path d="M1.500 7.500a15.500 15.500 0 0 1 22 0M5 11a10.500 10.500 0 0 1 15 0M8.500 14.200a5.700 5.700 0 0 1 8 0" /><circle cx="12.500" cy="16.800" r="1.300" fill="#fff" stroke="none" />
        </svg>
        <svg className="ml-[11px]" width="25" height="22" viewBox="0 0 25 22" {...line} stroke="#fff" strokeWidth="1.700">
          <path d="M1.500 8v6h3.500l5.500 5V3L5 8zM13 8.500q1.700 2.500 0 5" /><path d="M16 5.500q4 5.500 0 11M19.500 3q5.500 8 0 16" stroke="#6d6d6d" />
        </svg>
        <svg className="ml-[12px]" width="25" height="17" viewBox="0 0 25 17"><rect x="1" y="1" width="20" height="15" rx="3" fill="none" stroke="#fff" strokeWidth="1.800" /><rect x="4" y="4" width="9.500" height="9" rx="1" fill="#fff" /><path d="M22 6h1a1.500 1.500 0 0 1 1.500 1.500v2A1.500 1.500 0 0 1 23 11h-1z" fill="#fff" /></svg>
        <div className="mr-[29px] mt-[-3px] flex-1 text-right text-[17.500px] leading-[24px] tracking-[0.15px]">22:48<br />19-01-2025</div>
      </div>
    </div>
  );
}

const profiles = [
  ["Sam Singh", "Software Developer", "Pune"],
  ["Jane Smith", "Graphic Designer", "Baner, Pune"],
  ["Tushar Jane", "Web Developer", "Hinjewadi Phase 3"],
  ["Sam Brown", "Data Scientist", "Delhi"],
  ["Charlie Jane", "UX/UI Designer", "Mumbai"],
];

function BlueButton({ children }: { children: React.ReactNode }) {
  return <button className="h-[47px] rounded-md bg-[#007bff] px-6 text-[20px] leading-[23px] text-white">{children}</button>;
}

function TabStrip() {
  return (
    <div className="flex h-[51px] items-start bg-[#cdcdcd]">
      <div className="flex h-full w-[142px] items-center bg-[#cdcdcd]">
        <svg className="ml-[26px]" width="26" height="26" viewBox="0 0 26 26" {...line} stroke="#111" strokeWidth="1.500">
          <path d="M12 11.500l9-4.300c1.800-.7 3 0 3 1.800v9.500c0 1-.5 1.800-1.500 2.300L14 24.500c-1.800.7-3 0-3-1.800V13.500c0-1 .3-1.600 1-2z" />
          <path d="M8.500 20.500C7 20.700 6.300 20 6.300 18.500V9.800c0-1 .4-1.700 1.300-2.200l8.400-4c1.500-.6 2.500-.3 3 1" />
          <path d="M4 17.500c-1.600.2-2.500-.5-2.500-2V7c0-1 .5-1.700 1.300-2.100l8-3.700c1.300-.5 2.300-.2 2.800.8" />
        </svg>
        <svg className="ml-[39px]" width="22" height="22" viewBox="0 0 22 22"><rect x="1" y="1" width="20" height="20" rx="3.500" fill="none" stroke="#111" strokeWidth="1.600" /><path d="M1 7V4.500A3.500 3.500 0 0 1 4.500 1h13A3.500 3.500 0 0 1 21 4.500V7z" fill="#000" /><path d="M6 6v15" stroke="#111" strokeWidth="1.500" /></svg>
      </div>
      <div className="relative flex h-full w-[361px] items-center rounded-t-xl bg-[#f7f7f7]">
        <svg className="absolute -left-2.5 bottom-0" width="10" height="10" viewBox="0 0 10 10"><path d="M10 0v10H0A10 10 0 0 0 10 0z" fill="#f7f7f7" /></svg>
        <svg className="absolute -right-2.5 bottom-0" width="10" height="10" viewBox="0 0 10 10"><path d="M0 0v10h10A10 10 0 0 1 0 0z" fill="#f7f7f7" /></svg>
        <div className="ml-3"><ReactLogo /></div>
        <div className="ml-[14px] flex-1 font-['Open_Sans',sans-serif] text-[17.300px] text-[#111]">React App</div>
        <svg className="mr-[17px] mt-[2px]" width="13" height="13" viewBox="0 0 13 13" {...line} stroke="#111" strokeWidth="1.600"><path d="M1 1l11 11M12 1L1 12" /></svg>
      </div>
      <svg className="ml-[21px] mt-[14px]" width="22" height="22" viewBox="0 0 22 22" {...line} stroke="#111" strokeWidth="1.500"><path d="M11 1v20M1 11h20" /></svg>
      <div className="flex h-full flex-1 items-center justify-end">
        <svg className="mr-[53px]" width="16" height="16" viewBox="0 0 16 16"><path d="M.500 7.500h15" stroke="#000" strokeWidth="1.700" /></svg>
        <svg className="mr-[52px]" width="16" height="16" viewBox="0 0 16 16" {...line} stroke="#000" strokeWidth="1.700"><rect x="1" y="5" width="10" height="10" rx="2" /><path d="M5 1.500h5A5 5 0 0 1 15 6.500V10" /></svg>
        <svg className="mr-[26px]" width="17" height="17" viewBox="0 0 17 17" {...line} stroke="#000" strokeWidth="1.700"><path d="M1.500 1.500l14 14M15.500 1.500l-14 14" /></svg>
      </div>
    </div>
  );
}

const STAR = "M12.500 1.500l3.300 7 7.700 1-5.600 5.300 1.400 7.700-6.800-3.700-6.800 3.700 1.400-7.700L1.500 9.500l7.700-1z";

function AddressBar() {
  return (
    <div className="flex h-[59px] items-center bg-[#f7f7f7]">
      <svg className="ml-[29px]" width="25" height="22" viewBox="0 0 25 22" {...line} stroke="#111" strokeWidth="1.700"><path d="M24 11H1.500M11.500 1l-10 10 10 10" /></svg>
      <svg className="ml-[41px]" width="26" height="26" viewBox="0 0 26 26" {...line} stroke="#111" strokeWidth="1.700"><path d="M24.500 13A11.500 11.500 0 1 1 21.500 5.200L23.500 7.500" /><path d="M23.500 1.500v6h-6" /></svg>
      <div className="ml-[29px] flex h-[48px] w-[1494px] items-center rounded-full border border-[#cfcfcf] bg-white">
        <svg className="ml-[26px]" width="24" height="24" viewBox="0 0 24 24" fill="none" stroke="#666" strokeWidth="1.400"><circle cx="12" cy="12" r="11" /><path d="M12 10v7.500" /><circle cx="12" cy="6.800" r=".600" fill="#666" /></svg>
        <div className="ml-[22px] flex-1 pt-px font-['Open_Sans',sans-serif] text-[19.800px] leading-none text-[#111]">
          localhost<span className="text-[#767676]">:3001</span>
        </div>
        <svg className="mr-[37px]" width="24" height="24" viewBox="0 0 24 24" {...line} stroke="#777" strokeWidth="1.500"><path d="M11.500 12V4a2 2 0 0 0-2-2H4a2 2 0 0 0-2 2v17a1.500 1.500 0 0 0 1.500 1.500H20a2 2 0 0 0 2-2V14a2 2 0 0 0-2-2H2M11.500 12v10.500M14.500 5.500h8M18.500 1.500v8" /></svg>
        <svg className="mr-[34px]" width="24" height="24" viewBox="0 0 24 24" {...line} stroke="#777" strokeWidth="1.500"><path d="M1.500 22L8.500 4.500 15.500 22M4 16h9M12.500 4.500Q16.500 7 17 12M15.500 1.500Q22 6 22.500 13" /></svg>
        <svg className="mr-[24px]" width="25" height="25" viewBox="0 0 25 25" {...line} stroke="#777" strokeWidth="1.500"><path d={STAR} /></svg>
      </div>
      <svg className="ml-[29px]" width="26" height="26" viewBox="0 0 26 26" {...line} stroke="#111" strokeWidth="1.700"><path d="M16.500 10h8M16.500 15h8M16.500 20h8M16 8l-3-6-3.300 6.500-7.500 1 5.300 5.300L6.300 23l7-3.700" /></svg>
      <div className="ml-[38px]"><Avatar /></div>
      <svg className="ml-[40px]" width="21" height="5" viewBox="0 0 21 5"><circle cx="2.500" cy="2.500" r="1.900" /><circle cx="10.500" cy="2.500" r="1.900" /><circle cx="18.500" cy="2.500" r="1.900" /></svg>
      <div className="ml-[36px]"><Copilot size={34} id="top" /></div>
    </div>
  );
}

export default function App() {
  return (
    <div className="flex h-[1080px] w-[1920px] flex-col overflow-hidden bg-[#f7f7f7]">
      <TabStrip />
      <AddressBar />
      <div className="flex h-[898px] pl-[5px]">
        <div className="flex h-[893px] w-[1910px] overflow-hidden rounded-xl border border-[#dedede] bg-white shadow-sm">
          <div className="flex w-[1885px] shrink-0 flex-col font-['Liberation_Sans',Arial,sans-serif] text-black">
            <h1 className="mt-[32px] text-center text-[48px] font-bold leading-[55px]">Profile Map Application</h1>
            <div className="mt-[32px] flex justify-center gap-6">
              <BlueButton>Admin Page</BlueButton>
              <BlueButton>Profile Details</BlueButton>
            </div>
            <input className="mt-6 h-[49px] w-[626px] self-center rounded-md border border-[#cccccc] px-3 text-[20px] placeholder:text-[#757575]" placeholder="Search profiles..." />
            <div className="mt-6 flex gap-6">
              {profiles.map(([name, role, place]) => (
                <div key={name} className="flex h-[281px] w-[350px] flex-col items-center rounded-[12px] border border-[#dddddd] bg-white pt-[48px] shadow-[0_3px_6px_rgba(0,0,0,0.1)]">
                  <h3 className="text-[28px] font-bold leading-[32px]">{name}</h3>
                  <p className="mt-[24px] text-[24px] leading-[27px]">{role}</p>
                  <p className="mb-[25px] mt-[25px] text-[24px] leading-[27px]">{place}</p>
                  <BlueButton>Summary</BlueButton>
                </div>
              ))}
            </div>
            <h3 className="mt-[24px] text-center text-[28px] font-bold leading-[32px]">Location for Sam Singh</h3>
            <div className="relative mt-[24px] h-[267px]">
              <MapCanvas />
              <div className="absolute left-[15px] top-[15px] flex h-[60px] w-[252px] rounded-[3px] bg-white font-[Roboto,sans-serif] text-[27px] shadow-[0_1px_5px_rgba(0,0,0,0.3)]">
                <div className="flex w-[104px] items-center justify-center border-r border-[#e4e4e4] pl-px pt-[2px] font-medium text-black">Map</div>
                <div className="flex flex-1 items-center justify-center pt-[2px] text-[#565656]">Satellite</div>
              </div>
              <div className="absolute right-[15px] top-[15px] flex h-[60px] w-[60px] items-center justify-center rounded-[3px] bg-white shadow-[0_1px_5px_rgba(0,0,0,0.3)]">
                <svg width="27" height="27" viewBox="0 0 27 27" fill="none" stroke="#666" strokeWidth="3.600"><path d="M1.800 9V1.800H9M18 1.800h7.200V9M25.200 18v7.200H18M9 25.200H1.800V18" /></svg>
              </div>
            </div>
          </div>
          <div className="flex flex-1 flex-col items-center bg-[#fcfcfc] pt-[12px]">
            <svg width="15" height="12" viewBox="0 0 15 12" fill="#8b8b8b"><path d="M6.300 1a1.400 1.400 0 0 1 2.400 0l5.500 8.500c.6 1 .2 2-1 2H1.800c-1.200 0-1.600-1-1-2z" /></svg>
            <div className="mt-[11px] h-[598px] w-[13px] rounded-full bg-[#8b8b8b]" />
            <svg className="mt-[235px]" width="15" height="12" viewBox="0 0 15 12" fill="#8b8b8b"><path d="M6.300 11a1.400 1.400 0 0 0 2.400 0l5.500-8.500c.6-1 .2-2-1-2H1.800c-1.200 0-1.600 1-1 2z" /></svg>
          </div>
        </div>
      </div>
      <Taskbar />
    </div>
  );
}
